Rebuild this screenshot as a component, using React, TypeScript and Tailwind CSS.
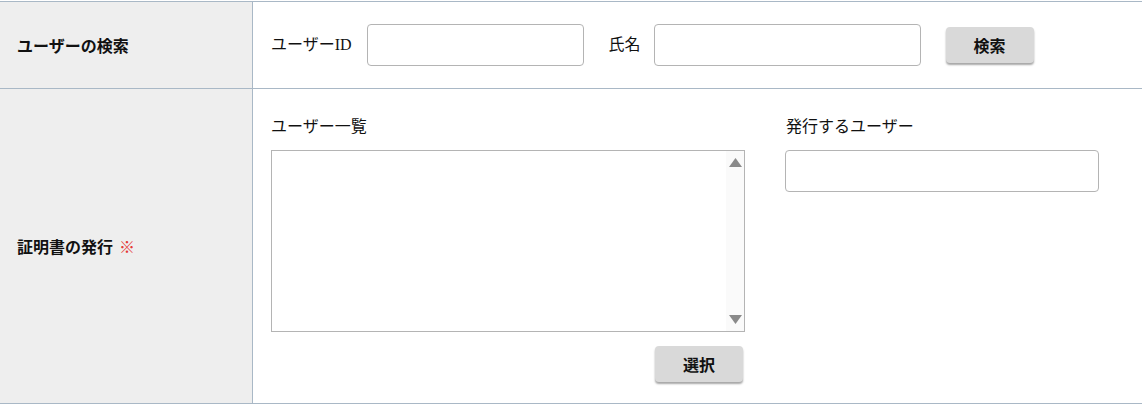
import React from 'react';

const SANS = "font-['Noto_Sans_CJK_JP','Noto_Sans',sans-serif]";
const SERIF = "font-['Liberation_Serif','Noto_Sans_CJK_JP',serif]";

function GrayButton({ children }: { children: React.ReactNode }) {
  return (
    <button
      type="button"
      className="h-[36px] w-[88px] rounded-[4px] bg-[#d9d9d9] text-[16px] font-bold leading-none text-[#111] shadow-[0_2px_2px_rgba(0,0,0,0.35)]"
    >
      {children}
    </button>
  );
}

function TextInput({ className = '' }: { className?: string }) {
  return (
    <input
      type="text"
      className={`h-[42px] rounded-[4px] border border-[#b4b4b4] bg-white px-2 outline-none ${className}`}
    />
  );
}

function ListBox() {
  return (
    <div className="flex h-[182px] w-[474px] border border-[#b4b4b4] bg-white">
      <div className="flex-1" />
      <div className="flex w-[18px] flex-col items-center justify-between bg-[#fafafa] pb-[7px] pt-[7px]">
        <svg width="13" height="9" viewBox="0 0 13 9">
          <polygon points="6.5,0 13,9 0,9" fill="#8a8a8a" />
        </svg>
        <svg width="13" height="9" viewBox="0 0 13 9">
          <polygon points="0,0 13,0 6.5,9" fill="#8a8a8a" />
        </svg>
      </div>
    </div>
  );
}

export default function App() {
  return (
    <div className={`${SANS} bg-white pt-px text-[16px] text-[#111]`}>
      <div className="grid grid-cols-[253px_1fr] border-t border-b border-[#a9b8c6]">
        {/* row 1: user search */}
        <div className="flex h-[87px] items-center border-b border-r border-[#a9b8c6] bg-[#eeeeee] pl-[17px] font-bold">
          ユーザーの検索
        </div>
        <div className="flex h-[87px] items-center border-b border-[#a9b8c6] pl-[18px]">
          <span className={`${SERIF} mr-[15px]`}>ユーザーID</span>
          <TextInput className="w-[217px]" />
          <span className={`${SERIF} ml-[25px] mr-[13px]`}>氏名</span>
          <TextInput className="w-[267px]" />
          <div className="ml-[25px]">
            <GrayButton>検索</GrayButton>
          </div>
        </div>

        {/* row 2: certificate issue */}
        <div className="flex h-[314px] items-center border-r border-[#a9b8c6] bg-[#eeeeee] pl-[17px] font-bold">
          証明書の発行
          <span className="ml-[6px] font-normal text-[#e53935]">※</span>
        </div>
        <div className="flex h-[314px] gap-[40px] pl-[18px] pt-[24px]">
          <div className="flex flex-col">
            <div className="h-[24px] leading-[24px]">ユーザー一覧</div>
            <div className="mt-[13px]">
              <ListBox />
            </div>
            <div className="mt-[14px] flex justify-end pr-[2px]">
              <GrayButton>選択</GrayButton>
            </div>
          </div>
          <div className="flex flex-col">
            <div className="h-[24px] pl-px leading-[24px]">発行するユーザー</div>
            <TextInput className="mt-[13px] w-[314px]" />
          </div>
        </div>
      </div>
    </div>
  );
}
